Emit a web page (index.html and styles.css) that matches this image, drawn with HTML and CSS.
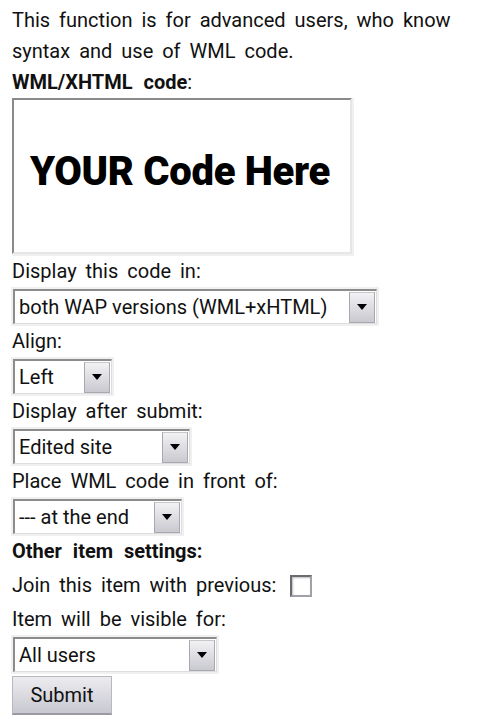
FILE: index.html
```html
<!DOCTYPE html>
<html lang="en">
<head>
    <meta charset="UTF-8">
    <meta name="viewport" content="width=device-width, initial-scale=1.0">
    <title>WML/XHTML code</title>
    <link rel="stylesheet" href="styles.css">
</head>
<body>
    <form class="page">
        <p class="line">This function is for advanced users, who know syntax and use of WML code.</p>
        <p class="line"><b>WML/XHTML code</b>:</p>
        <div class="code-box">
            <div class="code-inner"><span class="code-text">YOUR Code Here</span></div>
        </div>

        <p class="line">Display this code in:</p>
        <div class="select"><div class="field" style="width: 364px"><span class="value">both WAP versions (WML+xHTML)</span><span class="arrow"><svg width="12" height="8" viewBox="0 0 12 8"><path d="M1 1h10L6 7z" fill="#000"/></svg></span></div></div>

        <p class="line">Align:</p>
        <div class="select"><div class="field" style="width: 99px"><span class="value">Left</span><span class="arrow"><svg width="12" height="8" viewBox="0 0 12 8"><path d="M1 1h10L6 7z" fill="#000"/></svg></span></div></div>

        <p class="line">Display after submit:</p>
        <div class="select"><div class="field" style="width: 177px"><span class="value">Edited site</span><span class="arrow"><svg width="12" height="8" viewBox="0 0 12 8"><path d="M1 1h10L6 7z" fill="#000"/></svg></span></div></div>

        <p class="line">Place WML code in front of:</p>
        <div class="select"><div class="field" style="width: 169px"><span class="value">--- at the end</span><span class="arrow"><svg width="12" height="8" viewBox="0 0 12 8"><path d="M1 1h10L6 7z" fill="#000"/></svg></span></div></div>

        <p class="line"><b>Other item settings:</b></p>
        <p class="line check-row">Join this item with previous: <span class="checkbox"></span></p>
        <p class="line">Item will be visible for:</p>
        <div class="select"><div class="field" style="width: 204px"><span class="value">All users</span><span class="arrow"><svg width="12" height="8" viewBox="0 0 12 8"><path d="M1 1h10L6 7z" fill="#000"/></svg></span></div></div>
        <div><button type="button" class="submit">Submit</button></div>
    </form>
</body>
</html>
```

FILE: styles.css
```css
body {
    margin: 0;
    padding: 5px 12px 0 12px;
    font-family: Roboto, "Noto Sans", sans-serif;
    font-size: 20px;
    color: #111;
    background: #fff;
}
.line {
    margin: 0;
    line-height: 31px;
    word-spacing: 4px;
}
.line b {
    word-spacing: 6px;
}
.code-box {
    width: 342px;
    height: 158px;
    box-sizing: border-box;
    border-right: 2px solid #f0f0f0;
    border-bottom: 2px solid #f0f0f0;
}
.code-inner {
    height: 100%;
    box-sizing: border-box;
    border-top: 2px solid #8a8a8a;
    border-left: 2px solid #8a8a8a;
    border-right: 2px solid #e6e6e6;
    border-bottom: 2px solid #e6e6e6;
    display: flex;
    align-items: center;
    padding-left: 16px;
}
.code-text {
    font-family: Roboto, sans-serif;
    font-weight: 900;
    font-size: 40px;
    letter-spacing: -0.3px;
    color: #000;
    margin-top: -10px;
}
.select {
    display: flex;
    width: max-content;
    border: 2px solid #f0f0f0;
    margin-left: -1px;
}
.field {
    display: flex;
    align-items: center;
    height: 35px;
    box-sizing: border-box;
    border-top: 2px solid #8c8c8c;
    border-left: 2px solid #8c8c8c;
    border-right: 1px solid #ddd;
    border-bottom: 1px solid #ddd;
    background: #fff;
    padding: 0 1px 0 4px;
}
.value {
    flex: 1;
    white-space: nowrap;
}
.arrow {
    width: 26px;
    height: 31px;
    box-sizing: border-box;
    border: 1px solid #a8a8b0;
    border-top-color: #c8c8cc;
    background: linear-gradient(#f2f2f4, #c9c9d0);
    display: flex;
    align-items: center;
    justify-content: center;
}
.check-row {
    display: flex;
    align-items: center;
    height: 37px;
    gap: 5px;
    white-space: pre;
}
.checkbox {
    width: 22px;
    height: 22px;
    box-sizing: border-box;
    border: 2px solid #6a6a70;
    border-right-color: #a0a0a6;
    border-bottom-color: #a0a0a6;
    box-shadow: inset 1px 1px 2px #bbb;
    background: #fff;
}
.submit {
    margin: 2px 0 0 0;
    width: 100px;
    height: 39px;
    border: 1px solid #b8b8c0;
    border-bottom: 2px solid #9a9aa2;
    background: linear-gradient(#ececf0, #c8c8d0);
    font-family: Roboto, "Noto Sans", sans-serif;
    font-size: 20px;
    color: #111;
    padding: 0;
}
```
